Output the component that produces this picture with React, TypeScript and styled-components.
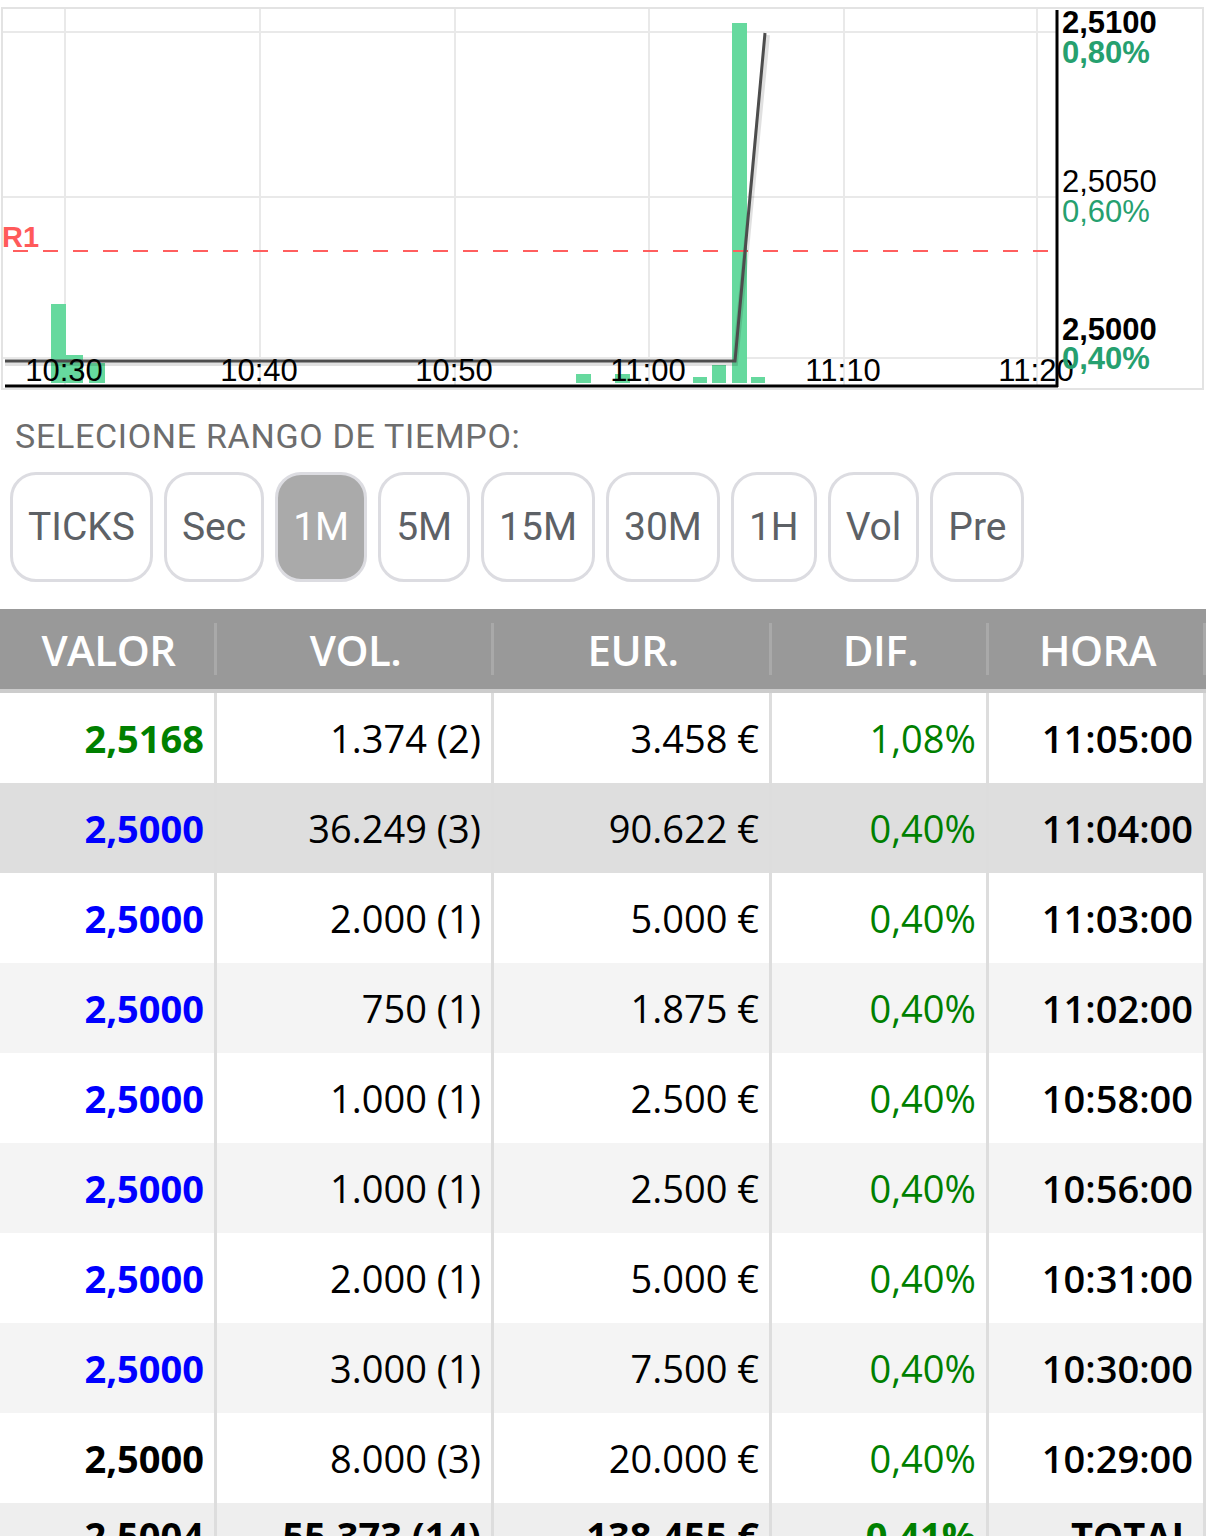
import styled, { createGlobalStyle } from 'styled-components'

const GlobalStyle = createGlobalStyle`
  html, body {
    margin: 0;
    padding: 0;
    background: #fff;
  }
  * {
    box-sizing: border-box;
  }
`

const GREEN = '#008000'
const BLUE = '#0000ff'
const AXIS_GREEN = '#26a06f'
const BAR = '#66d99e'

const COLUMNS = '217px 277px 278px 217px 217px'

const ranges = ['TICKS', 'Sec', '1M', '5M', '15M', '30M', '1H', 'Vol', 'Pre']

type Trade = {
  price: string
  priceColor: string
  vol: string
  eur: string
  dif: string
  time: string
}

const trades: Trade[] = [
  { price: '2,5168', priceColor: GREEN, vol: '1.374 (2)', eur: '3.458 €', dif: '1,08%', time: '11:05:00' },
  { price: '2,5000', priceColor: BLUE, vol: '36.249 (3)', eur: '90.622 €', dif: '0,40%', time: '11:04:00' },
  { price: '2,5000', priceColor: BLUE, vol: '2.000 (1)', eur: '5.000 €', dif: '0,40%', time: '11:03:00' },
  { price: '2,5000', priceColor: BLUE, vol: '750 (1)', eur: '1.875 €', dif: '0,40%', time: '11:02:00' },
  { price: '2,5000', priceColor: BLUE, vol: '1.000 (1)', eur: '2.500 €', dif: '0,40%', time: '10:58:00' },
  { price: '2,5000', priceColor: BLUE, vol: '1.000 (1)', eur: '2.500 €', dif: '0,40%', time: '10:56:00' },
  { price: '2,5000', priceColor: BLUE, vol: '2.000 (1)', eur: '5.000 €', dif: '0,40%', time: '10:31:00' },
  { price: '2,5000', priceColor: BLUE, vol: '3.000 (1)', eur: '7.500 €', dif: '0,40%', time: '10:30:00' },
  { price: '2,5000', priceColor: '#000', vol: '8.000 (3)', eur: '20.000 €', dif: '0,40%', time: '10:29:00' },
]

// volume bars: [x, width, top]; they all sit on y = 383
const bars: [number, number, number][] = [
  [51, 15, 304],
  [66, 17, 355],
  [89, 16, 363],
  [576, 15, 374],
  [615, 15, 374],
  [693, 14, 377],
  [712, 14, 365],
  [732, 15, 23],
  [751, 14, 377],
]

const gridX = [65, 260, 455, 649, 844, 1037]
const gridY = [32, 197, 358]
const times = ['10:30', '10:40', '10:50', '11:00', '11:10', '11:20']

const Chart = () => (
  <ChartFrame>
    <svg width="100%" height="379" viewBox="3 9 1199 379" style={{ display: 'block' }}>
      {gridX.map((x) => (
        <line key={'gx' + x} x1={x} y1={9} x2={x} y2={385} stroke="#e9e9e9" strokeWidth={2} />
      ))}
      {gridY.map((y) => (
        <line key={'gy' + y} x1={3} y1={y} x2={1056} y2={y} stroke="#e9e9e9" strokeWidth={2} />
      ))}

      {bars.map(([x, w, top]) => (
        <rect key={'b' + x} x={x} y={top} width={w} height={383 - top} fill={BAR} />
      ))}

      <text x={2} y={247} fontFamily="Liberation Sans, Arial, sans-serif" fontWeight="bold" fontSize={29} fill="#ff5a5a">
        R1
      </text>
      <line x1={3} y1={251} x2={1056} y2={251} stroke="#ff5e5e" strokeWidth={2} strokeDasharray="15 15" strokeDashoffset={-10} />

      <polyline points="5,363 735,363 767,35" fill="none" stroke="rgba(0,0,0,0.12)" strokeWidth={6} />
      <polyline points="5,361 735,361 765,33" fill="none" stroke="#4d4d4d" strokeWidth={3} />

      <g fontFamily="Liberation Sans, Arial, sans-serif" fontSize={31} fill="#000" textAnchor="middle">
        {times.map((t, i) => (
          <text key={t} x={gridX[i] - 1} y={381}>
            {t}
          </text>
        ))}
      </g>

      <line x1={5} y1={386} x2={1058} y2={386} stroke="#000" strokeWidth={3} />
      <line x1={1057} y1={10} x2={1057} y2={387} stroke="#000" strokeWidth={3} />

      <g fontFamily="Liberation Sans, Arial, sans-serif" fontSize={31}>
        <text x={1062} y={33} fontWeight="bold" fill="#000">2,5100</text>
        <text x={1062} y={63} fontWeight="bold" fill={AXIS_GREEN}>0,80%</text>
        <text x={1062} y={192} fill="#000">2,5050</text>
        <text x={1062} y={222} fill={AXIS_GREEN}>0,60%</text>
        <text x={1062} y={340} fontWeight="bold" fill="#000">2,5000</text>
        <text x={1062} y={369} fontWeight="bold" fill={AXIS_GREEN}>0,40%</text>
      </g>
    </svg>
  </ChartFrame>
)

const App = () => {
  return (
    <Page>
      <GlobalStyle />
      <Chart />

      <RangeSection>
        <RangeTitle>SELECIONE RANGO DE TIEMPO:</RangeTitle>
        <RangeButtons>
          {ranges.map((r) => (
            <RangeButton key={r} $active={r === '1M'}>
              {r}
            </RangeButton>
          ))}
        </RangeButtons>
      </RangeSection>

      <Table>
        <HeadRow>
          <HeadCell>VALOR</HeadCell>
          <HeadCell>VOL.</HeadCell>
          <HeadCell>EUR.</HeadCell>
          <HeadCell>DIF.</HeadCell>
          <HeadCell>HORA</HeadCell>
        </HeadRow>

        {trades.map((t, i) => (
          <Row key={i} $bg={i === 1 ? '#dedede' : i % 2 ? '#f4f4f4' : '#fff'}>
            <Cell $color={t.priceColor} $weight={700}>{t.price}</Cell>
            <Cell>{t.vol}</Cell>
            <Cell>{t.eur}</Cell>
            <Cell $color={GREEN}>{t.dif}</Cell>
            <Cell $weight={600}>{t.time}</Cell>
          </Row>
        ))}

        <Row $bg="#eeeeee" $height={64}>
          <Cell $weight={700}>2,5004</Cell>
          <Cell $weight={700}>55.373 (14)</Cell>
          <Cell $weight={700}>138.455 €</Cell>
          <Cell $color={GREEN} $weight={700}>0,41%</Cell>
          <Cell $weight={700}>TOTAL</Cell>
        </Row>
      </Table>
    </Page>
  )
}

export default App

const Page = styled.div`
  width: 1206px;
  background: #fff;
  overflow: hidden;
`

const ChartFrame = styled.div`
  margin: 7px 2px 0 1px;
  border: 2px solid #e3e3e3;
  background: #fff;
`

const RangeSection = styled.section`
  padding: 26px 0 0 10px;
`

const RangeTitle = styled.div`
  padding-left: 5px;
  height: 40px;
  line-height: 40px;
  font-family: Roboto, 'Noto Sans', sans-serif;
  font-size: 34px;
  letter-spacing: 0.7px;
  color: #6d6d6d;
`

const RangeButtons = styled.div`
  display: flex;
  gap: 11px;
  margin-top: 16px;
`

const RangeButton = styled.button<{ $active?: boolean }>`
  height: 110px;
  padding: 0 15px;
  border: 3px solid #dcdce1;
  border-radius: 26px;
  background: ${(p) => (p.$active ? '#aaaaaa' : '#fff')};
  color: ${(p) => (p.$active ? '#fff' : '#5d6166')};
  font-family: Roboto, 'Noto Sans', sans-serif;
  font-size: 39px;
  cursor: pointer;
`

const Table = styled.div`
  margin-top: 27px;
  font-family: 'Open Sans', 'Noto Sans', sans-serif;
`

const HeadRow = styled.div`
  display: grid;
  grid-template-columns: ${COLUMNS};
  height: 84px;
  background: #999999;
  border-bottom: 4px solid #cccccc;
`

const HeadCell = styled.div`
  position: relative;
  display: flex;
  align-items: center;
  justify-content: center;
  color: #fff;
  font-size: 42px;
  font-weight: 600;
  letter-spacing: -0.5px;

  &::after {
    content: '';
    position: absolute;
    right: 0;
    top: 14px;
    bottom: 14px;
    width: 3px;
    background: #a9a9a9;
  }
`

const Row = styled.div<{ $bg: string; $height?: number }>`
  display: grid;
  grid-template-columns: ${COLUMNS};
  height: ${(p) => p.$height || 90}px;
  background: ${(p) => p.$bg};
`

const Cell = styled.div<{ $color?: string; $weight?: number }>`
  display: flex;
  align-items: center;
  justify-content: flex-end;
  padding-right: 10px;
  border-right: 3px solid #dddddd;
  font-size: 38px;
  color: ${(p) => p.$color || '#000'};
  font-weight: ${(p) => p.$weight || 400};
  white-space: nowrap;
`
